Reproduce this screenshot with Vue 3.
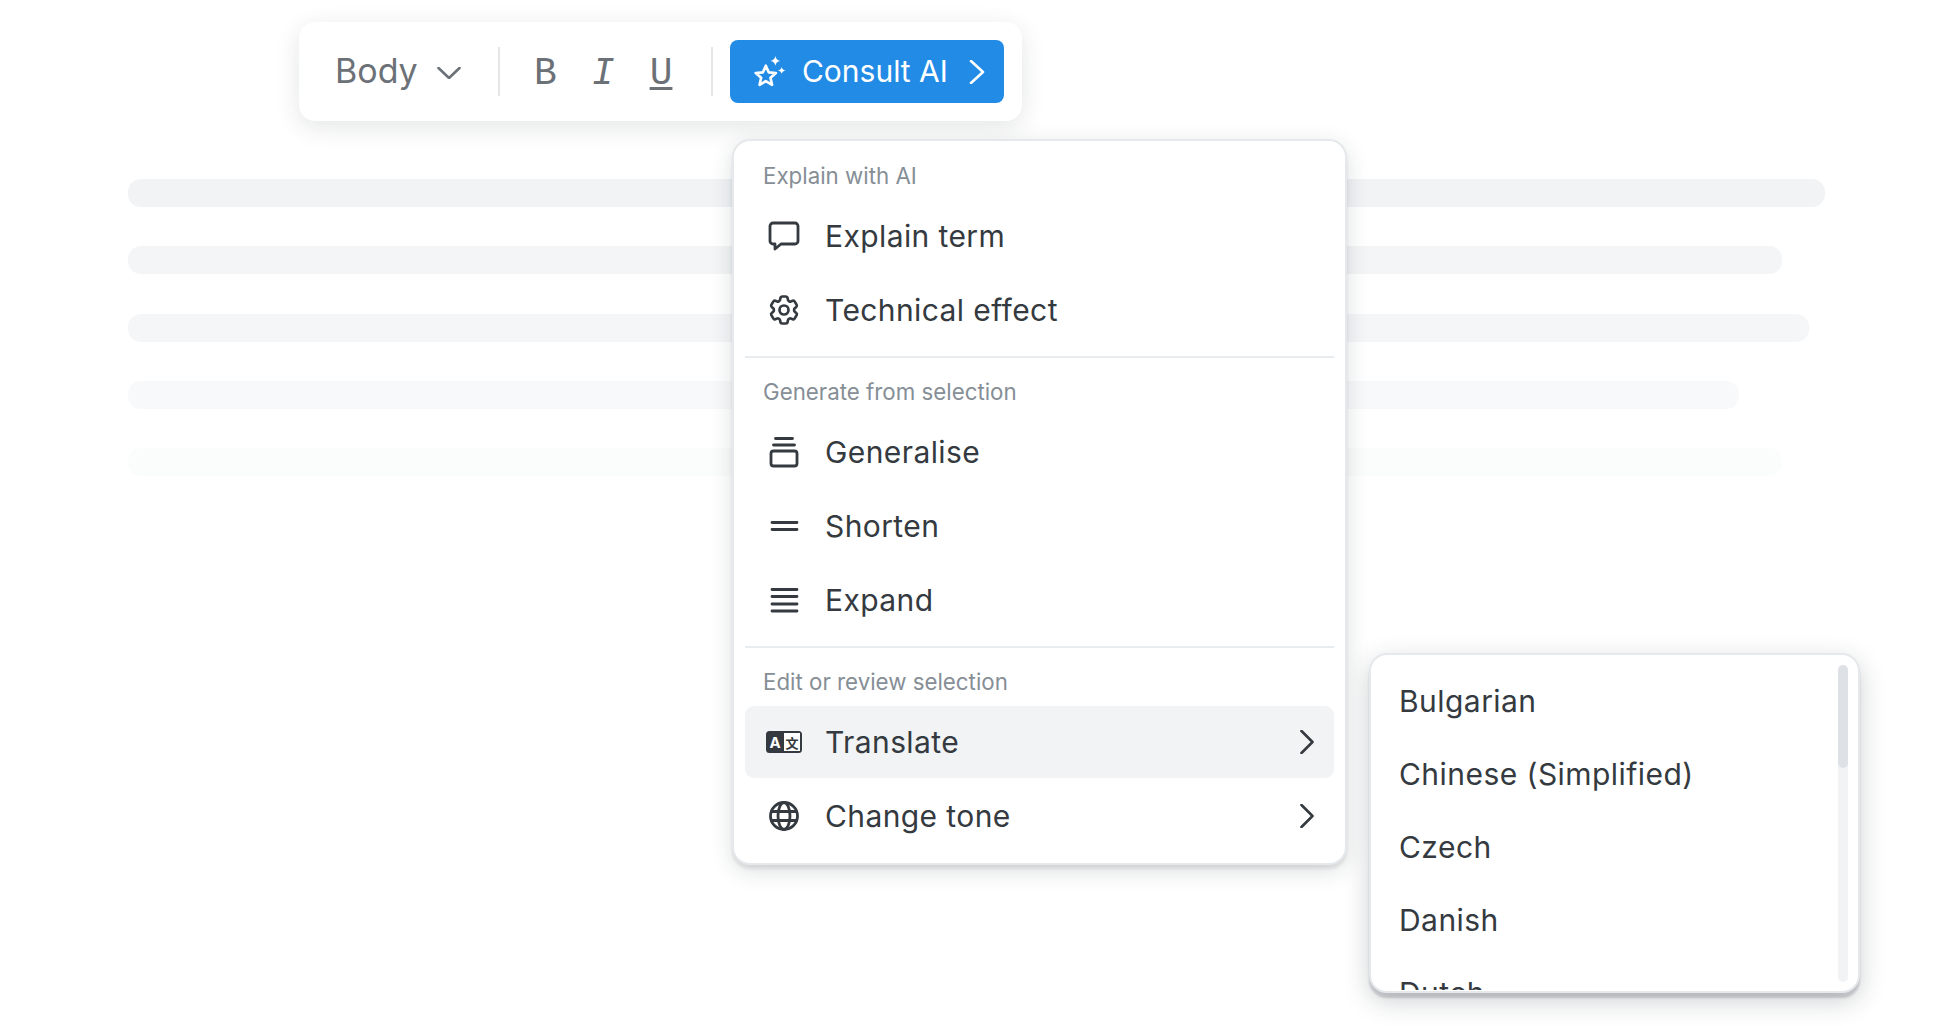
<script setup>
const bars = [
  { width: 1697, opacity: 1 },
  { width: 1654, opacity: 0.85 },
  { width: 1681, opacity: 0.72 },
  { width: 1611, opacity: 0.5 },
  { width: 1654, opacity: 0.27 },
];

const languages = ["Bulgarian", "Chinese (Simplified)", "Czech", "Danish", "Dutch"];
</script>

<template>
  <div class="page">
    <div class="toolbar">
      <span class="style-name">Body</span>
      <svg class="caret" width="24" height="12" viewBox="0 0 24 12">
        <path d="M1.5 1l10.5 10L22.5 1" />
      </svg>
      <span class="divider first"></span>
      <div class="marks">
        <span class="mark">B</span>
        <span class="mark italic">I</span>
        <span class="mark under">U</span>
      </div>
      <span class="divider second"></span>
      <button class="consult">
        <svg class="star" width="36" height="36" viewBox="0 0 34 34">
          <path class="star-line" d="M14 11l2.7 6.3 6.8.6-5.1 4.5 1.5 6.700-5.900-3.500-5.900 3.500 1.500-6.700-5.100-4.500 6.800-.6z" />
          <path class="star-fill" d="M23 2q.6 3.900 4.500 4.500-3.900.6-4.500 4.500-.6-3.900-4.500-4.500 3.900-.6 4.500-4.500z" />
          <path class="star-fill" d="M29 12q.4 3.100 3.500 3.500-3.100.4-3.500 3.500-.4-3.100-3.500-3.500 3.100-.4 3.500-3.500z" />
        </svg>
        <span class="consult-text">Consult AI</span>
        <svg class="go" width="16" height="24" viewBox="0 0 16 24">
          <path d="M2 1l12 11L2 23" />
        </svg>
      </button>
    </div>

    <div class="skeleton">
      <div
        v-for="(bar, i) in bars"
        :key="i"
        class="bar"
        :style="{ width: bar.width + 'px', opacity: bar.opacity }"
      ></div>
    </div>

    <div class="menu">
      <div class="label">Explain with AI</div>
      <div class="row">
        <svg class="icon" viewBox="0 0 36 36">
          <path d="M7 5h22a3 3 0 0 1 3 3v15a3 3 0 0 1-3 3H15l-6 5v-5H7a3 3 0 0 1-3-3V8a3 3 0 0 1 3-3z" />
        </svg>
        <span>Explain term</span>
      </div>
      <div class="row">
        <svg class="icon gear" viewBox="0 0 24 24">
          <path d="M9.594 3.94c.09-.542.56-.94 1.11-.94h2.593c.55 0 1.02.398 1.11.94l.213 1.281c.063.374.313.686.645.87.074.04.147.083.22.127.325.196.72.257 1.075.124l1.217-.456a1.125 1.125 0 0 1 1.37.49l1.296 2.247a1.125 1.125 0 0 1-.26 1.431l-1.003.827c-.293.241-.438.613-.43.992a7.723 7.723 0 0 1 0 .255c-.008.378.137.75.43.991l1.004.827c.424.35.534.955.26 1.43l-1.298 2.247a1.125 1.125 0 0 1-1.369.491l-1.217-.456c-.355-.133-.75-.072-1.076.124a6.47 6.47 0 0 1-.22.128c-.331.183-.581.495-.644.869l-.213 1.281c-.09.543-.56.94-1.11.94h-2.594c-.55 0-1.019-.398-1.11-.94l-.213-1.281c-.062-.374-.312-.686-.644-.87a6.52 6.52 0 0 1-.22-.127c-.325-.196-.72-.257-1.076-.124l-1.217.456a1.125 1.125 0 0 1-1.369-.49l-1.297-2.247a1.125 1.125 0 0 1 .26-1.431l1.004-.827c.292-.24.437-.613.43-.991a6.932 6.932 0 0 1 0-.255c.007-.38-.138-.751-.43-.992l-1.004-.827a1.125 1.125 0 0 1-.26-1.43l1.297-2.247a1.125 1.125 0 0 1 1.37-.491l1.216.456c.356.133.751.072 1.076-.124.072-.044.146-.086.22-.128.332-.183.582-.495.644-.869l.214-1.28Z" />
          <circle cx="12" cy="12" r="3" />
        </svg>
        <span>Technical effect</span>
      </div>
      <div class="sep"></div>
      <div class="label">Generate from selection</div>
      <div class="row">
        <svg class="icon" viewBox="0 0 36 36">
          <path d="M9.500 4.500h17M7.500 11h21" />
          <rect x="5" y="17" width="26" height="15" rx="2.500" />
        </svg>
        <span>Generalise</span>
      </div>
      <div class="row">
        <svg class="icon" viewBox="0 0 36 36">
          <path d="M6 14.500h25M6 21.500h25" />
        </svg>
        <span>Shorten</span>
      </div>
      <div class="row">
        <svg class="icon" viewBox="0 0 36 36">
          <path d="M6 7.500h25M6 14.500h25M6 22h25M6 29h25" />
        </svg>
        <span>Expand</span>
      </div>
      <div class="sep"></div>
      <div class="label">Edit or review selection</div>
      <div class="row active">
        <svg class="icon translate" viewBox="0 0 36 36">
          <rect class="tr-box" x="0" y="7" width="36" height="22" rx="3.500" />
          <rect class="tr-page" x="18" y="9" width="16" height="18" />
          <text class="tr-a" x="9" y="24" text-anchor="middle">A</text>
          <text class="tr-b" x="26" y="23.500" text-anchor="middle">文</text>
        </svg>
        <span>Translate</span>
        <svg class="more" width="14" height="24" viewBox="0 0 14 24">
          <path d="M1.500 1l11 11-11 11" />
        </svg>
      </div>
      <div class="row">
        <svg class="icon" viewBox="0 0 36 36">
          <circle cx="18" cy="18" r="13.500" />
          <ellipse cx="18" cy="18" rx="6" ry="13.500" />
          <path d="M5.500 13.500h25M5.500 22.500h25" />
        </svg>
        <span>Change tone</span>
        <svg class="more" width="14" height="24" viewBox="0 0 14 24">
          <path d="M1.500 1l11 11-11 11" />
        </svg>
      </div>
    </div>

    <div class="submenu">
      <div class="lang-list">
        <div v-for="lang in languages" :key="lang" class="lang">{{ lang }}</div>
      </div>
      <div class="track"><div class="thumb"></div></div>
    </div>
  </div>
</template>

<style scoped>
.page {
  position: relative;
  width: 1950px;
  height: 1026px;
  overflow: hidden;
  background: #fff;
  font-family: Inter, "Liberation Sans", sans-serif;
}

.toolbar {
  display: inline-flex;
  align-items: center;
  height: 99px;
  box-sizing: border-box;
  margin: 22px 0 0 299px;
  padding: 0 18px 0 36px;
  background: #fff;
  border-radius: 16px;
  box-shadow: 0 6px 24px rgba(30, 40, 50, 0.12);
  vertical-align: top;
}

.style-name {
  font-size: 34px;
  color: #6b7177;
  width: 83px;
  padding-bottom: 2px;
  white-space: nowrap;
}

.caret {
  margin-left: 19px;
  margin-top: 3px;
}

.caret path,
.go path,
.more path {
  fill: none;
  stroke-width: 2.600;
  stroke-linecap: round;
  stroke-linejoin: round;
}

.caret path {
  stroke: #6b7177;
}

.divider {
  width: 2px;
  height: 49px;
  background: #e4e6e8;
}

.divider.first {
  margin: 0 34px 0 37px;
}

.divider.second {
  margin: 0 17px 0 39px;
}

.marks {
  display: flex;
  gap: 35px;
  padding-top: 5px;
}

.mark {
  font-family: "Liberation Mono", monospace;
  font-size: 38px;
  line-height: 44px;
  color: #6b7177;
}

.mark.italic {
  font-style: italic;
}

.mark.under {
  text-decoration: underline;
  text-decoration-thickness: 3px;
  text-underline-offset: 3px;
}

.consult {
  display: flex;
  align-items: center;
  height: 63px;
  padding: 0 19px 0 21px;
  border: none;
  border-radius: 8px;
  background: #228be6;
  color: #fff;
  font-family: inherit;
  font-size: 30px;
  white-space: nowrap;
}

.consult-text {
  padding-bottom: 2px;
}

.star {
  margin-right: 14.500px;
}

.star-line {
  fill: none;
  stroke: #fff;
  stroke-width: 2.500;
  stroke-linejoin: round;
}

.star-fill {
  fill: #fff;
}

.go {
  margin-left: 21px;
}

.go path {
  stroke: #fff;
}

.skeleton {
  display: flex;
  flex-direction: column;
  gap: 39.250px;
  margin: 58px 0 0 128px;
}

.bar {
  height: 28px;
  border-radius: 13px;
  background: #f1f3f5;
}

.menu {
  position: absolute;
  left: 732px;
  top: 139px;
  width: 615px;
  box-sizing: border-box;
  padding: 11px;
  background: #fff;
  border: 2px solid #e6e9ec;
  border-radius: 18px;
  box-shadow: 0 4px 3px rgba(30, 40, 50, 0.09), 0 6px 22px rgba(30, 40, 50, 0.15);
  display: flex;
  flex-direction: column;
  gap: 2px;
}

.label {
  height: 46px;
  box-sizing: border-box;
  display: flex;
  align-items: center;
  padding-left: 18px;
  font-size: 22.300px;
  color: #868e96;
}

.row {
  display: flex;
  align-items: center;
  height: 72px;
  flex-shrink: 0;
  padding: 0 20px 0 21px;
  border-radius: 9px;
  font-size: 30px;
  letter-spacing: 0.400px;
  color: #343a40;
}

.row.active {
  background: #f1f3f5;
}

.icon {
  width: 36px;
  height: 36px;
  margin-right: 23px;
  flex-shrink: 0;
  fill: none;
  stroke: #343a40;
  stroke-width: 2.800;
  stroke-linecap: round;
  stroke-linejoin: round;
}

.icon.gear {
  stroke-width: 1.800;
}

.icon.translate {
  stroke: none;
}

.tr-box {
  fill: #343a40;
}

.tr-page {
  fill: #fff;
}

.tr-a {
  fill: #fff;
  font-size: 15px;
  font-weight: 700;
  letter-spacing: 0;
}

.tr-b {
  fill: #343a40;
  font-family: "Noto Sans CJK SC", sans-serif;
  font-size: 13px;
  font-weight: 700;
  letter-spacing: 0;
}

.more {
  margin-left: auto;
}

.more path {
  stroke: #343a40;
}

.sep {
  height: 2px;
  flex-shrink: 0;
  margin: 8px 0;
  background: #e9ecef;
}

.submenu {
  position: absolute;
  left: 1369px;
  top: 653px;
  width: 491px;
  height: 340px;
  box-sizing: border-box;
  display: flex;
  align-items: flex-start;
  overflow: hidden;
  background: #fff;
  border: 2px solid #e6e9ec;
  border-radius: 18px;
  box-shadow: 0 5px 2px rgba(30, 40, 50, 0.18), 0 8px 26px rgba(30, 40, 50, 0.22);
}

.lang-list {
  flex: 1;
  height: 335px;
  box-sizing: border-box;
  overflow: hidden;
  padding: 9px 0 0 28px;
}

.lang {
  display: flex;
  align-items: center;
  height: 73px;
  font-size: 30px;
  letter-spacing: 0.450px;
  color: #343a40;
}

.track {
  width: 10px;
  height: 317px;
  margin: 10px 10px 0 0;
  border-radius: 5px;
  background: #f1f3f5;
}

.thumb {
  height: 103px;
  border-radius: 5px;
  background: #dee2e6;
}
</style>

<style>
body {
  margin: 0;
  background: #fff;
}
</style>
